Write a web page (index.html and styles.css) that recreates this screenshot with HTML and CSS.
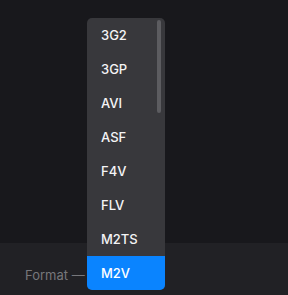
FILE: index.html
```html
<!DOCTYPE html>
<html lang="en">

<head>
    <meta charset="UTF-8">
    <meta name="viewport" content="width=device-width, initial-scale=1.0">
    <title>Format</title>
    <link rel="stylesheet" href="styles.css">
</head>

<body>
    <div class="app">
        <div class="stage"></div>
        <div class="bar">
            <span class="label">Format —</span>
            <div class="picker">
                <ul class="menu">
                    <li>3G2</li>
                    <li>3GP</li>
                    <li>AVI</li>
                    <li>ASF</li>
                    <li>F4V</li>
                    <li>FLV</li>
                    <li>M2TS</li>
                    <li class="active">M2V</li>
                </ul>
                <div class="scroll"></div>
            </div>
        </div>
    </div>
</body>

</html>
```
FILE: styles.css
```css
* {
    margin: 0;
    padding: 0;
    box-sizing: border-box;
}

ul {
    list-style: none;
}

body {
    background: #18181c;
    font-family: Inter, "Liberation Sans", sans-serif;
    width: 288px;
    height: 295px;
    overflow: hidden;
}

.app {
    display: flex;
    flex-direction: column;
    height: 295px;
}

.stage {
    height: 243px;
    background: #18181c;
}

.bar {
    flex: 1;
    background: #212125;
    display: flex;
    align-items: center;
    padding-left: 25px;
    position: relative;
}

.label {
    color: #77777b;
    font-size: 13px;
    margin-top: 12px;
}

.picker {
    position: absolute;
    left: 87px;
    bottom: 5px;
    width: 78px;
    background: #38383c;
    border-radius: 5px;
    overflow: hidden;
}

.menu li {
    height: 34px;
    line-height: 34px;
    padding-left: 14px;
    color: #f4f4f6;
    font-size: 13px;
    font-weight: 500;
}

.menu li.active {
    background: #0a84ff;
    color: #fff;
}

.scroll {
    position: absolute;
    top: 2px;
    right: 4px;
    width: 4px;
    height: 93px;
    border-radius: 2px;
    background: #5c5c60;
}
```
